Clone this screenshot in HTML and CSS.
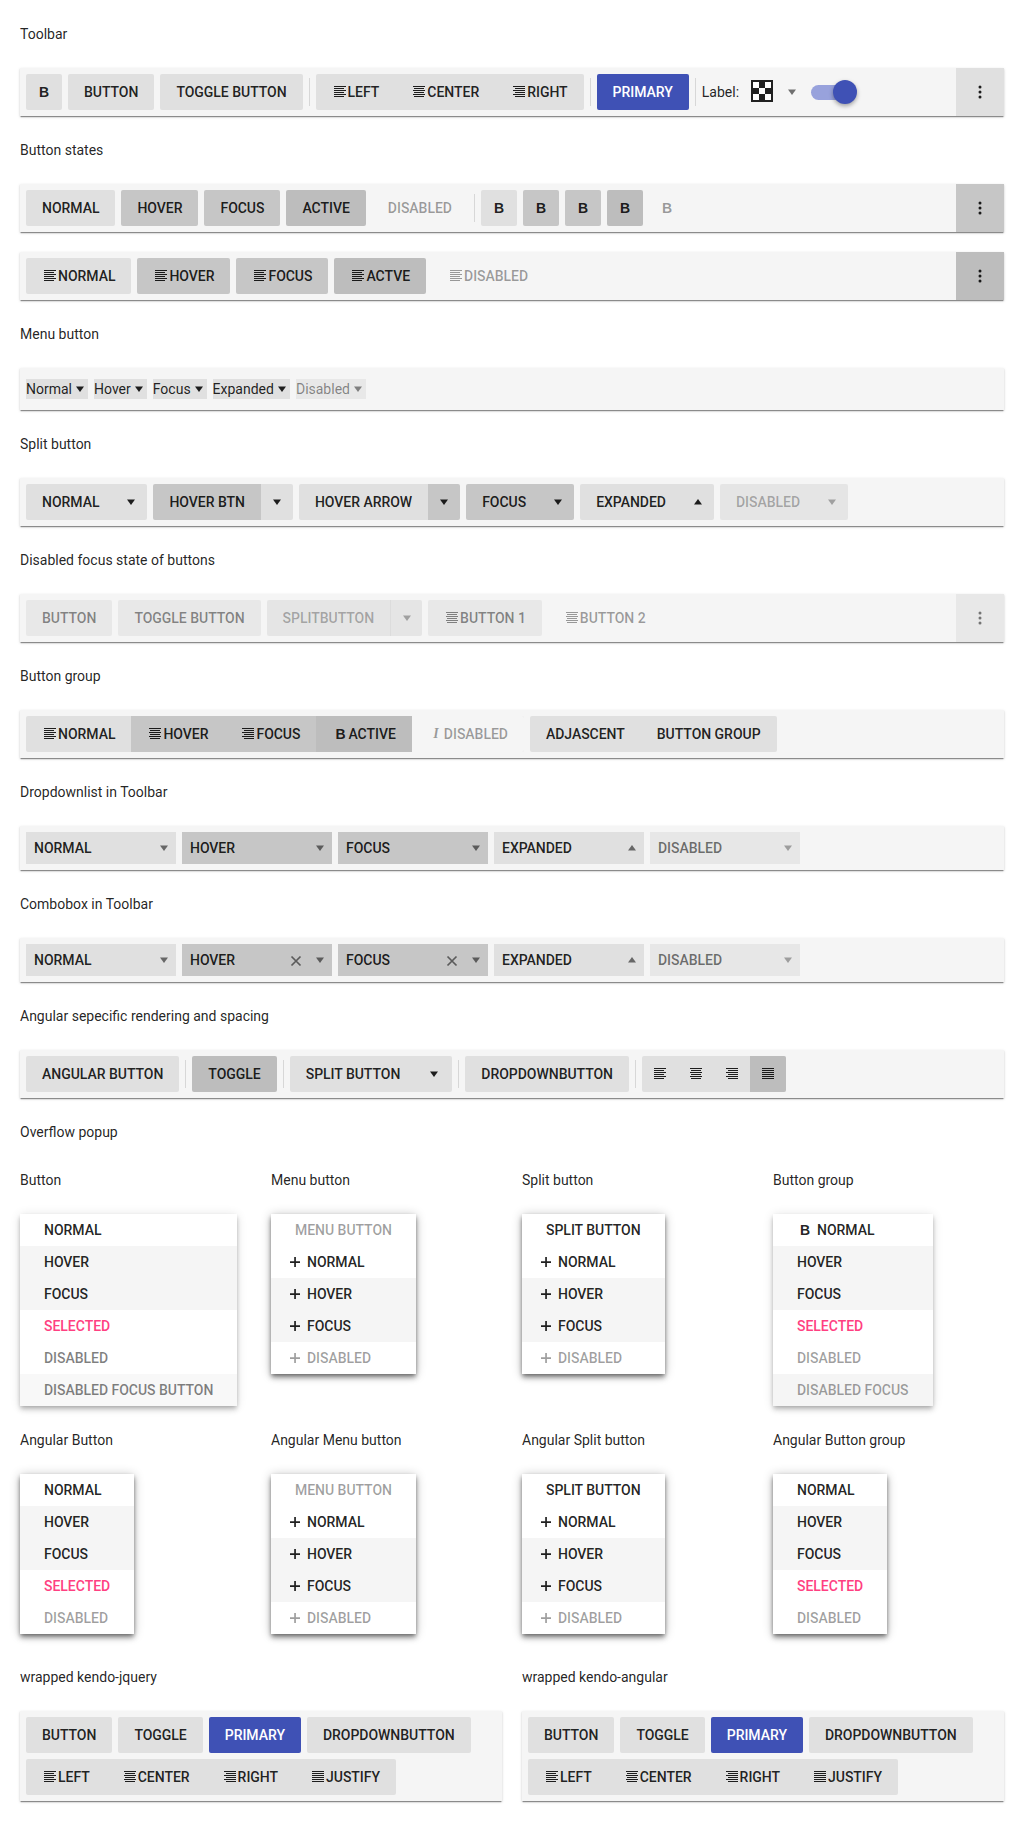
FILE: index.html
```html
<!DOCTYPE html>
<html lang="en">
<head>
<meta charset="utf-8">
<title>Toolbar</title>
<link rel="stylesheet" href="styles.css">
</head>
<body>
<svg class="defs" aria-hidden="true">
  <symbol id="i-left" viewBox="0 0 16 16"><path d="M2 2h12v1H2zM2 4h10v1H2zM2 6h12v1H2zM2 8h10v1H2zM2 10h12v1H2zM2 12h10v1H2z"/></symbol>
  <symbol id="i-center" viewBox="0 0 16 16"><path d="M2 2h12v1H2zM3 4h10v1H3zM2 6h12v1H2zM3 8h10v1H3zM2 10h12v1H2zM3 12h10v1H3z"/></symbol>
  <symbol id="i-right" viewBox="0 0 16 16"><path d="M2 2h12v1H2zM4 4h10v1H4zM2 6h12v1H2zM4 8h10v1H4zM2 10h12v1H2zM4 12h10v1H4z"/></symbol>
  <symbol id="i-justify" viewBox="0 0 16 16"><path d="M2 2h12v1H2zM2 4h12v1H2zM2 6h12v1H2zM2 8h12v1H2zM2 10h12v1H2zM2 12h12v1H2z"/></symbol>
  <symbol id="i-down" viewBox="0 0 16 16"><path d="M4 5.500h8l-4 5.500z"/></symbol>
  <symbol id="i-up" viewBox="0 0 16 16"><path d="M4 10.500h8L8 5z"/></symbol>
  <symbol id="i-plus" viewBox="0 0 16 16"><path d="M3 7.200h10v1.700H3zM7.200 3h1.700v10H7.200z"/></symbol>
  <symbol id="i-x" viewBox="0 0 16 16"><path d="M3.500 3.500l9 9M12.500 3.500l-9 9" fill="none" stroke="currentColor" stroke-width="1.700"/></symbol>
  <symbol id="i-more" viewBox="0 0 16 16"><circle cx="8" cy="3" r="1.500"/><circle cx="8" cy="8" r="1.500"/><circle cx="8" cy="13" r="1.500"/></symbol>
</svg>

<h2 class="title">Toolbar</h2>
<div class="toolbar">
  <span class="btn glyph-btn"><b class="glyph">B</b></span>
  <span class="btn">Button</span>
  <span class="btn">Toggle Button</span>
  <span class="sep"></span>
  <span class="group">
    <span class="btn"><svg class="ic"><use href="#i-left"/></svg>Left</span>
    <span class="btn"><svg class="ic"><use href="#i-center"/></svg>Center</span>
    <span class="btn"><svg class="ic"><use href="#i-right"/></svg>Right</span>
  </span>
  <span class="sep"></span>
  <span class="btn primary">Primary</span>
  <span class="sep"></span>
  <span class="label">Label:</span>
  <span class="picker">
    <svg class="swatch" viewBox="0 0 22 22"><rect width="22" height="22" fill="#212121"/><path fill="#fff" d="M2 2h6v6H2zM14 2h6v6h-6zM8 8h6v6H8zM2 14h6v6H2zM14 14h6v6h-6z"/></svg>
    <svg class="ic muted"><use href="#i-down"/></svg>
  </span>
  <span class="switch"><span class="track"></span><span class="thumb"></span></span>
  <span class="anchor"><svg class="ic"><use href="#i-more"/></svg></span>
</div>

<h2 class="title">Button states</h2>
<div class="toolbar">
  <span class="btn">Normal</span>
  <span class="btn hover">Hover</span>
  <span class="btn hover">Focus</span>
  <span class="btn active">Active</span>
  <span class="btn off">Disabled</span>
  <span class="sep"></span>
  <span class="btn glyph-btn"><b class="glyph">B</b></span>
  <span class="btn glyph-btn hover"><b class="glyph">B</b></span>
  <span class="btn glyph-btn hover"><b class="glyph">B</b></span>
  <span class="btn glyph-btn active"><b class="glyph">B</b></span>
  <span class="btn glyph-btn off"><b class="glyph">B</b></span>
  <span class="anchor hover"><svg class="ic"><use href="#i-more"/></svg></span>
</div>
<div class="toolbar">
  <span class="btn"><svg class="ic"><use href="#i-left"/></svg>Normal</span>
  <span class="btn hover"><svg class="ic"><use href="#i-left"/></svg>Hover</span>
  <span class="btn hover"><svg class="ic"><use href="#i-left"/></svg>Focus</span>
  <span class="btn active"><svg class="ic"><use href="#i-left"/></svg>Actve</span>
  <span class="btn off"><svg class="ic"><use href="#i-left"/></svg>Disabled</span>
  <span class="anchor active"><svg class="ic"><use href="#i-more"/></svg></span>
</div>

<h2 class="title">Menu button</h2>
<div class="toolbar toolbar-menu">
  <span class="menu-btn">Normal<svg class="ic"><use href="#i-down"/></svg></span>
  <span class="menu-btn">Hover<svg class="ic"><use href="#i-down"/></svg></span>
  <span class="menu-btn">Focus<svg class="ic"><use href="#i-down"/></svg></span>
  <span class="menu-btn">Expanded<svg class="ic"><use href="#i-down"/></svg></span>
  <span class="menu-btn menu-off">Disabled<svg class="ic"><use href="#i-down"/></svg></span>
</div>

<h2 class="title">Split button</h2>
<div class="toolbar">
  <span class="split"><span class="btn">Normal</span><span class="btn arrow"><svg class="ic"><use href="#i-down"/></svg></span></span>
  <span class="split"><span class="btn hover">Hover btn</span><span class="btn arrow"><svg class="ic"><use href="#i-down"/></svg></span></span>
  <span class="split"><span class="btn">Hover arrow</span><span class="btn arrow hover"><svg class="ic"><use href="#i-down"/></svg></span></span>
  <span class="split"><span class="btn hover">Focus</span><span class="btn arrow hover"><svg class="ic"><use href="#i-down"/></svg></span></span>
  <span class="split"><span class="btn">Expanded</span><span class="btn arrow"><svg class="ic"><use href="#i-up"/></svg></span></span>
  <span class="split split-off"><span class="btn">Disabled</span><span class="btn arrow"><svg class="ic"><use href="#i-down"/></svg></span></span>
</div>

<h2 class="title">Disabled focus state of buttons</h2>
<div class="toolbar">
  <span class="btn dim">Button</span>
  <span class="btn dim">Toggle Button</span>
  <span class="split split-off"><span class="btn">Splitbutton</span><span class="btn arrow divided"><svg class="ic"><use href="#i-down"/></svg></span></span>
  <span class="btn dim"><svg class="ic"><use href="#i-center"/></svg>Button 1</span>
  <span class="btn off"><svg class="ic"><use href="#i-center"/></svg>Button 2</span>
  <span class="anchor anchor-dim"><svg class="ic"><use href="#i-more"/></svg></span>
</div>

<h2 class="title">Button group</h2>
<div class="toolbar">
  <span class="group">
    <span class="btn"><svg class="ic"><use href="#i-left"/></svg>Normal</span>
    <span class="btn hover"><svg class="ic"><use href="#i-center"/></svg>Hover</span>
    <span class="btn hover"><svg class="ic"><use href="#i-right"/></svg>Focus</span>
    <span class="btn active"><b class="glyph glyph-box">B</b>Active</span>
    <span class="btn off"><i class="glyph-i">I</i>Disabled</span>
  </span>
  <span class="group">
    <span class="btn">Adjascent</span>
    <span class="btn">Button group</span>
  </span>
</div>

<h2 class="title">Dropdownlist in Toolbar</h2>
<div class="toolbar">
  <span class="dd"><span class="dd-text">Normal</span><span class="dd-arrow"><svg class="ic"><use href="#i-down"/></svg></span></span>
  <span class="dd hover"><span class="dd-text">Hover</span><span class="dd-arrow"><svg class="ic"><use href="#i-down"/></svg></span></span>
  <span class="dd hover"><span class="dd-text">Focus</span><span class="dd-arrow"><svg class="ic"><use href="#i-down"/></svg></span></span>
  <span class="dd"><span class="dd-text">Expanded</span><span class="dd-arrow"><svg class="ic"><use href="#i-up"/></svg></span></span>
  <span class="dd dd-off"><span class="dd-text">Disabled</span><span class="dd-arrow"><svg class="ic"><use href="#i-down"/></svg></span></span>
</div>

<h2 class="title">Combobox in Toolbar</h2>
<div class="toolbar">
  <span class="dd"><span class="dd-text">Normal</span><span class="dd-arrow"><svg class="ic"><use href="#i-down"/></svg></span></span>
  <span class="dd hover"><span class="dd-text">Hover</span><span class="dd-clear"><svg class="ic"><use href="#i-x"/></svg></span><span class="dd-arrow"><svg class="ic"><use href="#i-down"/></svg></span></span>
  <span class="dd hover"><span class="dd-text">Focus</span><span class="dd-clear"><svg class="ic"><use href="#i-x"/></svg></span><span class="dd-arrow"><svg class="ic"><use href="#i-down"/></svg></span></span>
  <span class="dd"><span class="dd-text">Expanded</span><span class="dd-arrow"><svg class="ic"><use href="#i-up"/></svg></span></span>
  <span class="dd dd-off"><span class="dd-text">Disabled</span><span class="dd-arrow"><svg class="ic"><use href="#i-down"/></svg></span></span>
</div>

<h2 class="title">Angular sepecific rendering and spacing</h2>
<div class="toolbar">
  <span class="btn">Angular Button</span>
  <span class="sep"></span>
  <span class="btn active">Toggle</span>
  <span class="sep"></span>
  <span class="split"><span class="btn">Split Button</span><span class="btn arrow arrow-wide"><svg class="ic"><use href="#i-down"/></svg></span></span>
  <span class="sep"></span>
  <span class="btn">DropdownButton</span>
  <span class="sep"></span>
  <span class="group">
    <span class="btn icon-btn"><svg class="ic"><use href="#i-left"/></svg></span>
    <span class="btn icon-btn"><svg class="ic"><use href="#i-center"/></svg></span>
    <span class="btn icon-btn"><svg class="ic"><use href="#i-right"/></svg></span>
    <span class="btn icon-btn active"><svg class="ic"><use href="#i-justify"/></svg></span>
  </span>
</div>

<h2 class="title">Overflow popup</h2>
<div class="popups">
  <section>
    <h3 class="sub">Button</h3>
    <ul class="popup">
      <li>Normal</li>
      <li class="it-hover">Hover</li>
      <li class="it-hover">Focus</li>
      <li class="it-sel">Selected</li>
      <li class="it-dim">Disabled</li>
      <li class="it-dim it-dimfocus">Disabled Focus Button</li>
    </ul>
  </section>
  <section>
    <h3 class="sub">Menu button</h3>
    <ul class="popup popup-heavy popup-menu">
      <li class="it-off it-head">Menu Button</li>
      <li><svg class="ic"><use href="#i-plus"/></svg>Normal</li>
      <li class="it-hover"><svg class="ic"><use href="#i-plus"/></svg>Hover</li>
      <li class="it-hover"><svg class="ic"><use href="#i-plus"/></svg>Focus</li>
      <li class="it-off"><svg class="ic"><use href="#i-plus"/></svg>Disabled</li>
    </ul>
  </section>
  <section>
    <h3 class="sub">Split button</h3>
    <ul class="popup popup-heavy popup-menu">
      <li class="it-head">Split Button</li>
      <li><svg class="ic"><use href="#i-plus"/></svg>Normal</li>
      <li class="it-hover"><svg class="ic"><use href="#i-plus"/></svg>Hover</li>
      <li class="it-hover"><svg class="ic"><use href="#i-plus"/></svg>Focus</li>
      <li class="it-off"><svg class="ic"><use href="#i-plus"/></svg>Disabled</li>
    </ul>
  </section>
  <section>
    <h3 class="sub">Button group</h3>
    <ul class="popup">
      <li><b class="glyph glyph-box glyph-gap">B</b>Normal</li>
      <li class="it-hover">Hover</li>
      <li class="it-hover">Focus</li>
      <li class="it-sel">Selected</li>
      <li class="it-off">Disabled</li>
      <li class="it-off it-hover">Disabled Focus</li>
    </ul>
  </section>
  <section>
    <h3 class="sub">Angular Button</h3>
    <ul class="popup popup-heavy">
      <li>Normal</li>
      <li class="it-hover">Hover</li>
      <li class="it-hover">Focus</li>
      <li class="it-sel">Selected</li>
      <li class="it-off">Disabled</li>
    </ul>
  </section>
  <section>
    <h3 class="sub">Angular Menu button</h3>
    <ul class="popup popup-heavy popup-menu">
      <li class="it-off it-head">Menu Button</li>
      <li><svg class="ic"><use href="#i-plus"/></svg>Normal</li>
      <li class="it-hover"><svg class="ic"><use href="#i-plus"/></svg>Hover</li>
      <li class="it-hover"><svg class="ic"><use href="#i-plus"/></svg>Focus</li>
      <li class="it-off"><svg class="ic"><use href="#i-plus"/></svg>Disabled</li>
    </ul>
  </section>
  <section>
    <h3 class="sub">Angular Split button</h3>
    <ul class="popup popup-heavy popup-menu">
      <li class="it-head">Split Button</li>
      <li><svg class="ic"><use href="#i-plus"/></svg>Normal</li>
      <li class="it-hover"><svg class="ic"><use href="#i-plus"/></svg>Hover</li>
      <li class="it-hover"><svg class="ic"><use href="#i-plus"/></svg>Focus</li>
      <li class="it-off"><svg class="ic"><use href="#i-plus"/></svg>Disabled</li>
    </ul>
  </section>
  <section>
    <h3 class="sub">Angular Button group</h3>
    <ul class="popup popup-heavy">
      <li>Normal</li>
      <li class="it-hover">Hover</li>
      <li class="it-hover">Focus</li>
      <li class="it-sel">Selected</li>
      <li class="it-off">Disabled</li>
    </ul>
  </section>
</div>

<div class="wrapped">
  <section>
    <h3 class="sub">wrapped kendo-jquery</h3>
    <div class="toolbar">
      <span class="btn">Button</span>
      <span class="btn">Toggle</span>
      <span class="btn primary">Primary</span>
      <span class="btn">DropdownButton</span>
      <span class="group">
        <span class="btn"><svg class="ic"><use href="#i-left"/></svg>Left</span>
        <span class="btn"><svg class="ic"><use href="#i-center"/></svg>Center</span>
        <span class="btn"><svg class="ic"><use href="#i-right"/></svg>Right</span>
        <span class="btn"><svg class="ic"><use href="#i-justify"/></svg>Justify</span>
      </span>
    </div>
  </section>
  <section>
    <h3 class="sub">wrapped kendo-angular</h3>
    <div class="toolbar">
      <span class="btn">Button</span>
      <span class="btn">Toggle</span>
      <span class="btn primary">Primary</span>
      <span class="btn">DropdownButton</span>
      <span class="group">
        <span class="btn"><svg class="ic"><use href="#i-left"/></svg>Left</span>
        <span class="btn"><svg class="ic"><use href="#i-center"/></svg>Center</span>
        <span class="btn"><svg class="ic"><use href="#i-right"/></svg>Right</span>
        <span class="btn"><svg class="ic"><use href="#i-justify"/></svg>Justify</span>
      </span>
    </div>
  </section>
</div>
</body>
</html>
```

FILE: styles.css
```css
* { box-sizing: border-box; }

html, body { margin: 0; background: #fff; }

body {
  padding: 24px 20px 20px;
  font: 400 14px/20px Roboto, "Liberation Sans", sans-serif;
  color: rgba(0, 0, 0, .87);
}

.defs { position: absolute; width: 0; height: 0; }

.title, .sub {
  font: inherit;
  margin: 0 0 24px;
}

.title { margin: 24px 0; }
body > .title:first-of-type { margin-top: 0; }

.toolbar {
  display: flex;
  flex-wrap: wrap;
  align-items: center;
  gap: 6px;
  padding: 6px;
  min-height: 42px;
  background: #f5f5f5;
  box-shadow: 0 2px 1px -1px rgba(0, 0, 0, .3), 0 1px 1px 0 rgba(0, 0, 0, .14), 0 1px 3px 0 rgba(0, 0, 0, .14);
}

.toolbar + .toolbar { margin-top: 20px; }

.toolbar-menu { height: 42px; }

.ic {
  display: block;
  flex: none;
  width: 16px;
  height: 16px;
  fill: currentColor;
}

.btn {
  display: inline-flex;
  align-items: center;
  justify-content: center;
  height: 36px;
  padding: 0 16px;
  border-radius: 2px;
  background: #e0e0e0;
  font-weight: 500;
  letter-spacing: -.03px;
  text-transform: uppercase;
  white-space: nowrap;
}

.btn.hover { background: #c6c6c6; }
.btn.active { background: #bdbdbd; }
.btn.off { background: none; color: rgba(0, 0, 0, .38); }
.btn.dim { background: #e8e8e8; color: rgba(0, 0, 0, .45); }
.btn.primary { background: #3f51b5; color: #fff; }

.glyph-btn, .icon-btn { width: 36px; padding: 0; }

.glyph {
  font: 700 14px/16px "Liberation Sans", sans-serif;
}

.glyph-box {
  display: inline-block;
  width: 16px;
  text-align: center;
  flex: none;
}

.glyph-gap { margin-right: 4px; }

.glyph-i {
  display: inline-block;
  width: 16px;
  text-align: center;
  font: italic 700 14px/16px "Liberation Serif", serif;
}

.sep {
  width: 1px;
  height: 28px;
  background: rgba(0, 0, 0, .12);
  flex: none;
}

.group {
  display: inline-flex;
  border-radius: 2px;
  background: #e0e0e0;
  overflow: hidden;
}

.group > .btn { background-color: transparent; border-radius: 0; }
.group > .btn.hover { background-color: #c6c6c6; }
.group > .btn.active { background-color: #bdbdbd; }
.group > .btn.off { background-color: #f5f5f5; }

.picker {
  display: flex;
  align-items: center;
  margin-left: 6px;
  gap: 11px;
}

.swatch { display: block; width: 22px; height: 22px; margin-top: -2px; }

.muted { color: rgba(0, 0, 0, .54); }

.switch {
  position: relative;
  display: block;
  width: 46px;
  height: 24px;
  margin-left: 5px;
}

.track {
  display: block;
  width: 36px;
  height: 15px;
  margin-top: 5px;
  border-radius: 8px;
  background: #98a2dc;
}

.thumb {
  position: absolute;
  top: 0;
  right: 0;
  width: 24px;
  height: 24px;
  border-radius: 50%;
  background: #3f51b5;
  box-shadow: 0 2px 4px rgba(0, 0, 0, .35);
}

.anchor {
  display: flex;
  align-items: center;
  justify-content: center;
  align-self: stretch;
  width: 48px;
  margin: -6px -6px -6px auto;
  background: #e0e0e0;
}

.anchor.hover { background: #c6c6c6; }
.anchor.active { background: #bdbdbd; }
.anchor.anchor-dim { background: #e8e8e8; color: rgba(0, 0, 0, .5); }

.menu-btn {
  display: inline-flex;
  align-items: center;
  height: 20px;
  background: #e0e0e0;
}

.menu-off { background: #e8e8e8; color: rgba(0, 0, 0, .45); }

.split { display: inline-flex; }
.split .btn { border-radius: 0; }
.split .btn:first-child { border-radius: 2px 0 0 2px; }
.split .arrow { width: 32px; padding: 0; border-radius: 0 2px 2px 0; }
.split .arrow-wide { width: 36px; }

.split-off .btn { background: #e5e5e5; color: rgba(0, 0, 0, .3); }
.split-off .divided { border-left: 1px solid #dcdcdc; }

.dd {
  display: flex;
  align-items: center;
  width: 150px;
  height: 32px;
  padding-left: 8px;
  background: #e0e0e0;
  font-weight: 500;
  letter-spacing: -.03px;
  text-transform: uppercase;
}

.dd.hover { background: #c6c6c6; }

.dd-text { flex: 1; }

.dd-arrow, .dd-clear {
  display: flex;
  justify-content: center;
  width: 24px;
  flex: none;
  color: rgba(0, 0, 0, .54);
}

.dd-clear { padding-top: 2px; }

.dd.dd-off { background: #e7e7e7; color: rgba(0, 0, 0, .55); }
.dd-off .dd-arrow { color: rgba(0, 0, 0, .32); }

.popups {
  display: grid;
  grid-template-columns: repeat(4, 231px);
  column-gap: 20px;
  row-gap: 24px;
  margin-top: 28px;
  align-items: start;
}

.popup {
  list-style: none;
  margin: 0;
  padding: 0;
  width: max-content;
  background: #fff;
  font-weight: 500;
  letter-spacing: -.03px;
  text-transform: uppercase;
  box-shadow: 0 2px 4px -1px rgba(0, 0, 0, .2), 0 4px 5px 0 rgba(0, 0, 0, .14), 0 1px 10px 0 rgba(0, 0, 0, .12);
}

.popup-heavy {
  box-shadow: 0 2px 4px -1px rgba(0, 0, 0, .4), 0 4px 5px 0 rgba(0, 0, 0, .28), 0 1px 10px 0 rgba(0, 0, 0, .24);
}

.popup li {
  display: flex;
  align-items: center;
  height: 32px;
  padding: 0 24px;
  white-space: nowrap;
}

.popup-menu li { padding-left: 16px; }
.popup-menu li.it-head { padding-left: 24px; }
.popup-menu .ic { margin-right: 4px; }

.popup li.it-hover { background: #f5f5f5; }
.popup li.it-sel { color: #ff4081; }
.popup li.it-off { color: rgba(0, 0, 0, .38); }
.popup li.it-dim { color: rgba(0, 0, 0, .5); }
.popup li.it-dimfocus { background: #f8f8f8; }

.wrapped {
  display: grid;
  grid-template-columns: repeat(2, 482px);
  column-gap: 20px;
  margin-top: 33px;
}
```
